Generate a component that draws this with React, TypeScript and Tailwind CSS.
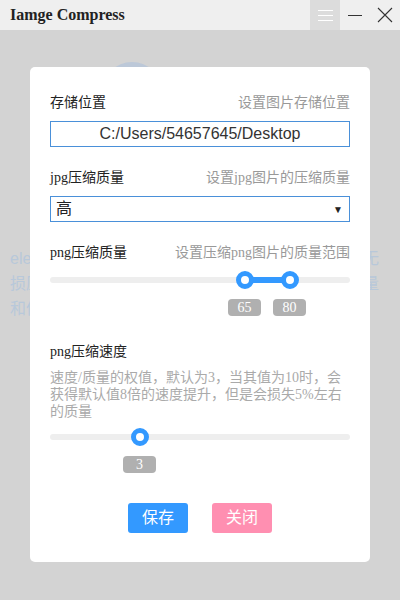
import React from "react";

const serif = "font-['Liberation_Serif','Noto_Sans_CJK_SC',serif]";

function Slider({ values, max }: { values: number[]; max: number }) {
  const pct = values.map((v) => (v / max) * 100);
  const lo = Math.min(...pct);
  const hi = Math.max(...pct);
  return (
    <div>
      <div className="relative h-[18px]">
        <div className="absolute left-0 right-0 top-[6px] h-[6px] rounded-sm bg-[#eeeeee]" />
        {values.length > 1 && (
          <div
            className="absolute top-[6px] h-[6px] bg-[#3399ff]"
            style={{ left: `${lo}%`, width: `${hi - lo}%` }}
          />
        )}
        {pct.map((p, i) => (
          <div
            key={i}
            className="absolute top-0 -ml-[9px] h-[18px] w-[18px] rounded-full border-[5px] border-[#3399ff] bg-white"
            style={{ left: `${p}%` }}
          />
        ))}
      </div>
      <div className="relative mt-[10px] h-[17px]">
        {values.map((v, i) => (
          <div
            key={i}
            className={`absolute top-0 -ml-[17px] flex h-[17px] w-[33px] items-center justify-center rounded-sm bg-[#b0b0b0] text-[14px] text-white ${serif}`}
            style={{ left: `${pct[i]}%` }}
          >
            {v}
          </div>
        ))}
      </div>
    </div>
  );
}

function Row({ label, hint }: { label: string; hint?: string }) {
  return (
    <div className={`flex items-center justify-between text-[14px] leading-5 ${serif}`}>
      <span className="text-[#222]">{label}</span>
      {hint && <span className="text-[#999]">{hint}</span>}
    </div>
  );
}

function BgLine({ left, right }: { left: string; right?: string }) {
  return (
    <div className="flex justify-between">
      <span className="w-[20px] overflow-hidden whitespace-nowrap">{left}</span>
      <span className="w-[16px] whitespace-nowrap">{right}</span>
    </div>
  );
}

export default function App() {
  return (
    <div className="relative h-[600px] w-[400px] overflow-hidden bg-[#d3d3d3] font-['Liberation_Sans','Noto_Sans_CJK_SC',sans-serif]">
      {/* title bar */}
      <div className="flex h-[30px] items-center bg-[#efefef]">
        <span className={`pl-[10px] text-[16px] font-bold text-[#222] ${serif}`}>Iamge Compress</span>
        <div className="ml-auto flex h-full items-center">
          <div className="flex h-full w-[30px] flex-col items-center justify-center gap-[4px] bg-[#dcdcdc]">
            <span className="h-px w-[15px] bg-white" />
            <span className="h-px w-[15px] bg-white" />
            <span className="h-px w-[15px] bg-white" />
          </div>
          <div className="flex w-[30px] items-center justify-center">
            <span className="h-px w-[14px] bg-[#333]" />
          </div>
          <div className="flex w-[30px] items-center justify-center">
            <svg width="16" height="16" viewBox="0 0 16 16" stroke="#333" strokeWidth="1.1">
              <path d="M1 1 L15 15 M15 1 L1 15" />
            </svg>
          </div>
        </div>
      </div>

      {/* page behind the dialog */}
      <div className="pl-[10px] pr-[21px]">
        <div className="ml-[92px] mt-[32px] h-[60px] w-[60px] rounded-full bg-[#bcc8d8]" />
        <div className="mt-[124px] text-[16px] leading-[25px] text-[#b8c8da]">
          <BgLine left="electron" right="无" />
          <BgLine left="损压缩" right="量" />
          <BgLine left="和体积" />
        </div>
      </div>

      {/* dialog */}
      <div className="absolute left-[30px] top-[67px] w-[340px] rounded-[5px] bg-white px-[20px] pb-[29px] pt-[26px]">
        <Row label="存储位置" hint="设置图片存储位置" />
        <div className="mt-[8px] flex h-[26px] items-center justify-center border border-[#4a90d9] text-[16px] text-[#333]">
          C:/Users/54657645/Desktop
        </div>

        <div className="mt-[21px]">
          <Row label="jpg压缩质量" hint="设置jpg图片的压缩质量" />
        </div>
        <div className="mt-[8px] flex h-[26px] items-center justify-between border border-[#4a90d9] pl-[5px] pr-[6px] text-[16px] text-[#222]">
          <span>高</span>
          <span className="text-[10px] text-[#222]">▼</span>
        </div>

        <div className="mt-[21px]">
          <Row label="png压缩质量" hint="设置压缩png图片的质量范围" />
        </div>
        <div className="mt-[8px]">
          <Slider values={[65, 80]} max={100} />
        </div>

        <div className="mt-[26px]">
          <Row label="png压缩速度" />
        </div>
        <p className={`mt-[7px] text-[14px] leading-[17px] text-[#aaa] ${serif}`}>
          速度/质量的权值，默认为3，当其值为10时，会获得默认值8倍的速度提升，但是会损失5%左右的质量
        </p>
        <div className="mt-[8px]">
          <Slider values={[3]} max={10} />
        </div>

        <div className="mt-[30px] flex justify-center gap-[24px]">
          <button className="h-[30px] w-[60px] rounded-[3px] bg-[#3399ff] text-[16px] text-white">保存</button>
          <button className="h-[30px] w-[60px] rounded-[3px] bg-[#ff8fb1] text-[16px] text-white">关闭</button>
        </div>
      </div>
    </div>
  );
}
